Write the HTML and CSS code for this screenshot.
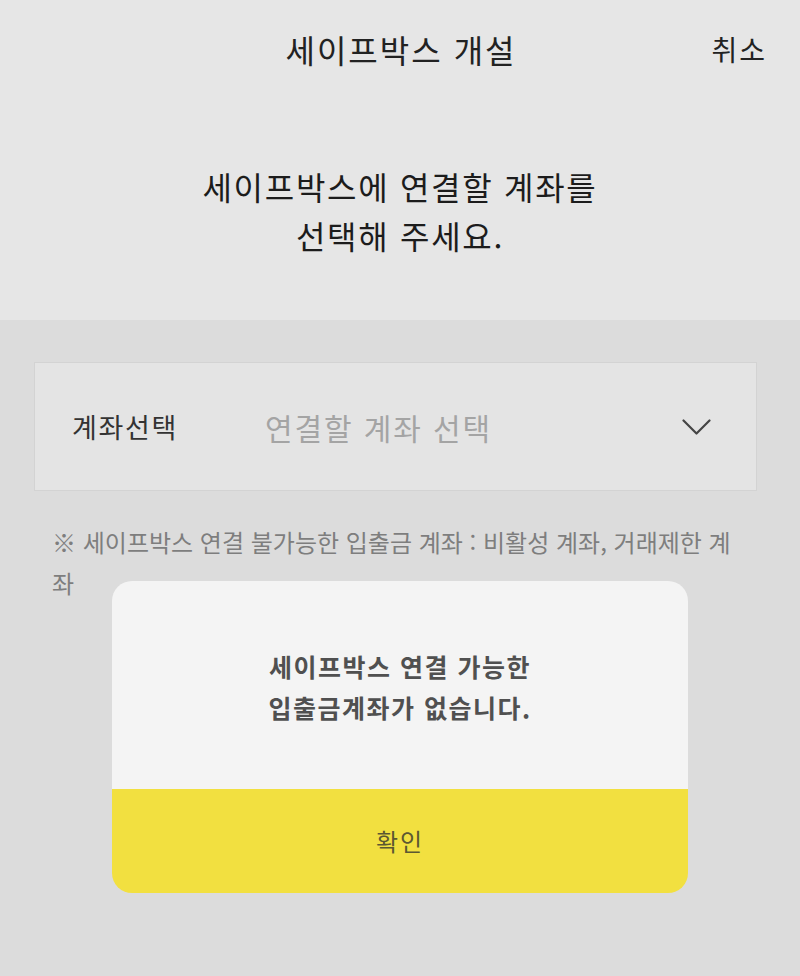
FILE: index.html
```html
<!DOCTYPE html>
<html lang="ko">
<head>
<meta charset="utf-8">
<title>세이프박스 개설</title>
<link rel="stylesheet" href="styles.css">
</head>
<body>
<div class="page">
  <section class="top">
    <header class="bar">
      <span></span>
      <h1 class="title">세이프박스 개설</h1>
      <span class="cancel">취소</span>
    </header>
    <p class="lead">세이프박스에 연결할 계좌를<br>선택해 주세요.</p>
  </section>
  <section class="content">
    <div class="select">
      <span class="select-label">계좌선택</span>
      <span class="select-value">연결할 계좌 선택</span>
      <svg class="chevron" width="29" height="17" viewBox="0 0 29 17" aria-hidden="true">
        <polyline points="1.5,1.5 14.5,14.5 27.5,1.5" fill="none" stroke="#454545" stroke-width="2.2" stroke-linecap="round" stroke-linejoin="round"/>
      </svg>
    </div>
    <p class="note">※ 세이프박스 연결 불가능한 입출금 계좌 : 비활성 계좌, 거래제한 계좌</p>
  </section>
  <div class="modal">
    <div class="modal-body">
      <p class="modal-text">세이프박스 연결 가능한<br>입출금계좌가 없습니다.</p>
    </div>
    <div class="modal-btn">확인</div>
  </div>
</div>
</body>
</html>
```

FILE: styles.css
```css
* { box-sizing: border-box; }
html, body { margin: 0; padding: 0; }
body {
  width: 800px;
  height: 976px;
  background: #dcdcdc;
  font-family: "Noto Sans CJK KR", "Noto Sans", sans-serif;
  overflow: hidden;
}
.page {
  position: relative;
  width: 800px;
  height: 976px;
}
.top {
  height: 320px;
  background: #e6e6e6;
  overflow: hidden;
}
.bar {
  height: 98px;
  display: grid;
  grid-template-columns: 1fr auto 1fr;
  align-items: center;
}
.title {
  margin: 0 0 0 2px;
  font-size: 32px;
  font-weight: 400;
  color: #222;
  letter-spacing: 2px;
  line-height: 1;
}
.cancel {
  justify-self: end;
  padding-right: 33px;
  font-size: 28px;
  color: #222;
  line-height: 1;
  letter-spacing: 2px;
}
.lead {
  margin: 64px 0 0;
  text-align: center;
  font-size: 32px;
  line-height: 49px;
  color: #1c1c1c;
  letter-spacing: 1.7px;
}
.content {
  padding-top: 42px;
}
.select {
  margin: 0 43px 0 34px;
  height: 129px;
  display: flex;
  align-items: center;
  background: #e4e4e4;
  border: 1px solid #d3d3d3;
  padding: 0 45px 0 37px;
}
.select-label {
  width: 193px;
  flex: none;
  font-size: 27px;
  color: #333;
  letter-spacing: 1.7px;
}
.select-value {
  flex: 1;
  font-size: 30px;
  color: #a4a4a4;
  letter-spacing: 1.9px;
}
.chevron {
  flex: none;
  margin-top: 2px;
}
.note {
  margin: 30px 0 0;
  padding: 0 60px 0 52px;
  font-size: 24px;
  line-height: 41px;
  color: #7e7e7e;
  letter-spacing: 0;
}
.modal {
  position: absolute;
  left: 112px;
  top: 581px;
  width: 576px;
  height: 312px;
  border-radius: 20px;
  overflow: hidden;
  display: flex;
  flex-direction: column;
}
.modal-body {
  height: 208px;
  background: #f4f4f4;
  display: flex;
  align-items: center;
  justify-content: center;
}
.modal-text {
  margin: 4px 0 0;
  text-align: center;
  font-size: 25px;
  font-weight: 700;
  line-height: 41px;
  color: #505050;
  letter-spacing: 1.5px;
}
.modal-btn {
  flex: 1;
  background: #f2e040;
  display: flex;
  align-items: center;
  justify-content: center;
  font-size: 24px;
  color: #5c5832;
  letter-spacing: 2px;
  padding-bottom: 2px;
}
```
